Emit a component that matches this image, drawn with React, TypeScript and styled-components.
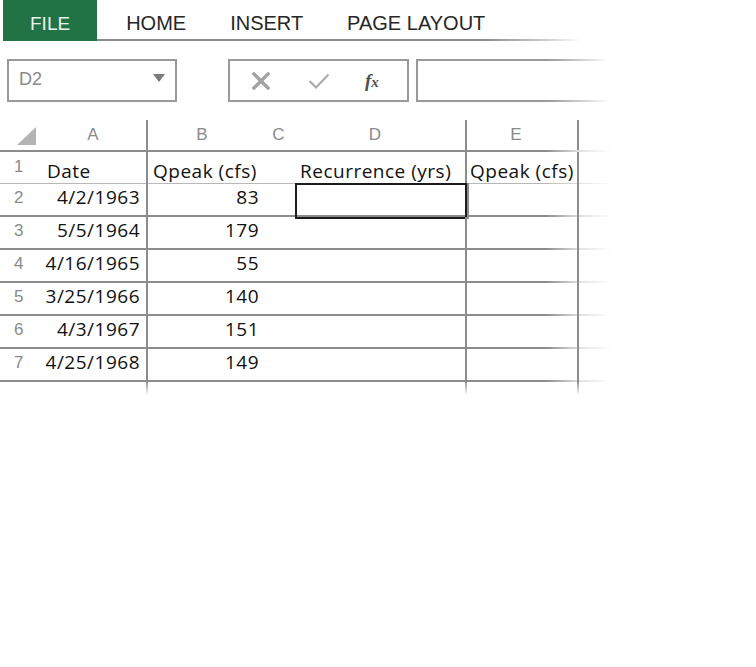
import React from 'react';
import styled, { createGlobalStyle } from 'styled-components';

const GlobalStyle = createGlobalStyle`
    html, body {
        margin: 0;
        padding: 0;
        background: #ffffff;
    }
`;

const LINE = '#8c8c8c';

const Page = styled.div`
    width: 756px;
    height: 667px;
    background: #fff;
    font-family: "Liberation Sans", Arial, sans-serif;
`;

const TabBar = styled.div`
    display: flex;
    height: 41px;
    margin-left: 3px;
    width: 577px;
    border-bottom: 2px solid;
    border-image: linear-gradient(to right, ${LINE} 480px, rgba(140,140,140,0.4) 545px, transparent 577px) 1;
    box-sizing: border-box;
`;

const Tab = styled.div<{ $active?: boolean }>`
    display: flex;
    align-items: center;
    height: ${props => props.$active ? '41px' : '39px'};
    padding: 7px ${props => props.$active ? '27px' : '22px'} 0;
    margin-right: ${props => props.$active ? '7px' : '0'};
    box-sizing: border-box;
    font-size: ${props => props.$active ? '19px' : '20px'};
    color: ${props => props.$active ? '#e8f1ec' : '#262626'};
    background: ${props => props.$active ? '#217346' : 'transparent'};
`;

const FormulaBar = styled.div`
    display: flex;
    align-items: stretch;
    height: 43px;
    margin-top: 18px;
    padding-left: 7px;
    gap: 7px;
`;

const Box = styled.div<{ $w: number }>`
    width: ${props => props.$w}px;
    border: 2px solid #999;
    box-sizing: border-box;
    display: flex;
    align-items: center;
`;

const NameBox = styled(Box)`
    justify-content: space-between;
    padding: 0 10px 2px 10px;
    margin-right: 44px;
    font-size: 18px;
    color: #8a8a8a;
`;

const Caret = styled.div`
    width: 0;
    height: 0;
    border-left: 6px solid transparent;
    border-right: 6px solid transparent;
    border-top: 8px solid #7a7a7a;
    margin-bottom: 4px;
`;

const Buttons = styled(Box)`
    padding-left: 22px;
    gap: 38px;
`;

const Fx = styled.span`
    font-family: "Liberation Serif", serif;
    font-style: italic;
    font-weight: bold;
    font-size: 19px;
    color: #505050;
    margin-left: -3px;

    small {
        font-size: 15px;
    }
`;

const FormulaInput = styled.div`
    width: 192px;
    border: 2px solid;
    border-right: none;
    border-image: linear-gradient(to right, #999 130px, rgba(153,153,153,0.3) 175px, transparent 192px) 1;
`;

const Sheet = styled.div`
    margin-top: 18px;
    width: 612px;
    display: flex;
    flex-direction: column;
`;

const COLS = '40px 108px 114px 33px 172px 112px 33px';

const Row = styled.div<{ $h: number; $light?: boolean; $noline?: boolean }>`
    display: grid;
    grid-template-columns: ${COLS};
    height: ${props => props.$h}px;
    box-sizing: border-box;
    border-bottom: ${props => props.$noline ? '0' : props.$light ? '1px' : '2px'} solid;
    border-image: linear-gradient(
        to right,
        ${props => props.$light ? '#b8b8b8' : LINE} 545px,
        rgba(200,200,200,0.5) 580px,
        transparent 612px
    ) 1;
`;

const Cell = styled.div<{ $line?: boolean; $align?: string; $pad?: number; $fade?: boolean; $low?: number }>`
    display: flex;
    align-items: center;
    justify-content: ${props => props.$align || 'flex-start'};
    white-space: nowrap;
    overflow: visible;
    padding: 0 ${props => props.$pad ?? 4}px;
    padding-bottom: ${props => props.$low ?? 0}px;
    box-sizing: border-box;
    font-family: "Open Sans", "Noto Sans", sans-serif;
    font-size: 19px;
    letter-spacing: 0.5px;
    color: #111;
    border-right: ${props => props.$line ? `2px solid ${LINE}` : 'none'};
    ${props => props.$fade && props.$line ? `border-image: linear-gradient(to bottom, ${LINE}, transparent) 1;` : ''}
`;

const HeadCell = styled(Cell)<{ $nudge?: number }>`
    font-family: "Liberation Sans", Arial, sans-serif;
    font-size: 17px;
    letter-spacing: 0;
    color: #8a8a8a;
    justify-content: center;
    padding: 0 ${props => props.$nudge ?? 0}px 0 0;
`;

const Corner = styled.div`
    display: flex;
    align-items: flex-end;
    padding: 0 0 5px 17px;
`;

const Triangle = styled.div`
    width: 0;
    height: 0;
    border-left: 19px solid transparent;
    border-bottom: 18px solid #b4b4b4;
`;

const RowNum = styled.div<{ $top?: number }>`
    padding: ${props => props.$top ?? 5}px 0 0 14px;
    font-size: 17px;
    line-height: 17px;
    color: #8a8a8a;
`;

const Selected = styled(Cell)`
    box-shadow: inset 0 0 0 2px #1c1c1c;
    margin: -1px -2px -1px 0;
`;

interface Rec {
    date: string;
    q: string;
}

const records: Rec[] = [
    { date: '4/2/1963', q: '83' },
    { date: '5/5/1964', q: '179' },
    { date: '4/16/1965', q: '55' },
    { date: '3/25/1966', q: '140' },
    { date: '4/3/1967', q: '151' },
    { date: '4/25/1968', q: '149' },
];

function CrossIcon() {
    return (
        <svg width="18" height="18" viewBox="0 0 18 18">
            <path d="M2 2 L16 16 M16 2 L2 16" stroke="#a3a3a3" strokeWidth="3.4" strokeLinecap="square" />
        </svg>
    );
}

function CheckIcon() {
    return (
        <svg width="22" height="18" viewBox="0 0 22 18">
            <path d="M1.5 9 L8 15.5 L20.5 2.5" stroke="#ababab" strokeWidth="2.2" fill="none" />
        </svg>
    );
}

export default function App() {
    return (
        <Page>
            <GlobalStyle />
            <TabBar>
                <Tab $active>FILE</Tab>
                <Tab>HOME</Tab>
                <Tab>INSERT</Tab>
                <Tab>PAGE LAYOUT</Tab>
            </TabBar>

            <FormulaBar>
                <NameBox $w={170}>
                    <span>D2</span>
                    <Caret />
                </NameBox>
                <Buttons $w={181}>
                    <CrossIcon />
                    <CheckIcon />
                    <Fx>f<small>x</small></Fx>
                </Buttons>
                <FormulaInput />
            </FormulaBar>

            <Sheet>
                <Row $h={32}>
                    <Corner><Triangle /></Corner>
                    <HeadCell $line $nudge={0}>A</HeadCell>
                    <HeadCell $nudge={6}>B</HeadCell>
                    <HeadCell>C</HeadCell>
                    <HeadCell $line $nudge={10}>D</HeadCell>
                    <HeadCell $line $nudge={12}>E</HeadCell>
                    <HeadCell />
                </Row>
                <Row $h={32} $light>
                    <RowNum $top={6}>1</RowNum>
                    <Cell $line $pad={7} style={{ paddingTop: 6 }}>Date</Cell>
                    <Cell $pad={5} style={{ paddingTop: 6 }}>Qpeak (cfs)</Cell>
                    <Cell />
                    <Cell $line $pad={5} style={{ paddingTop: 6 }}>Recurrence (yrs)</Cell>
                    <Cell $line $pad={3} style={{ paddingTop: 6 }}>Qpeak (cfs)</Cell>
                    <Cell />
                </Row>
                {records.map((r, i) => (
                    <Row key={r.date} $h={33}>
                        <RowNum>{i + 2}</RowNum>
                        <Cell $line $align="flex-end" $pad={6} $low={8}>{r.date}</Cell>
                        <Cell $align="flex-end" $pad={3} $low={8}>{r.q}</Cell>
                        <Cell />
                        {i === 0 ? <Selected $line /> : <Cell $line />}
                        <Cell $line />
                        <Cell />
                    </Row>
                ))}
                <Row $h={12} $noline>
                    <Cell />
                    <Cell $line $fade />
                    <Cell />
                    <Cell />
                    <Cell $line $fade />
                    <Cell $line $fade />
                    <Cell />
                </Row>
            </Sheet>
        </Page>
    );
}
